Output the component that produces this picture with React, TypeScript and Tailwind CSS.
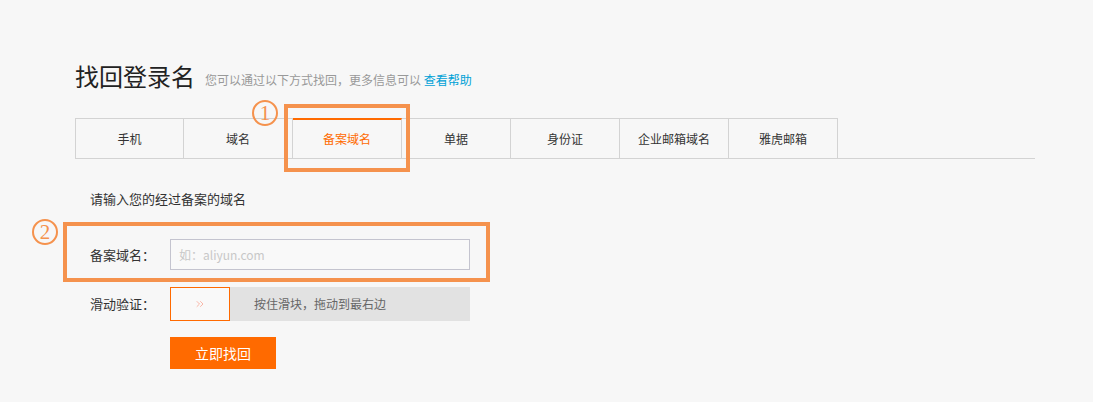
import { ChevronsRight } from "lucide-react";

const tabs = ["手机", "域名", "备案域名", "单据", "身份证", "企业邮箱域名", "雅虎邮箱"];

function Mark({ n, className }: { n: string; className: string }) {
  return (
    <div
      className={`absolute w-[26px] h-[26px] rounded-full border-2 border-[#f5924d] flex items-center justify-center text-[21px] leading-none text-[#f5924d] ${className}`}
      style={{ fontFamily: '"Liberation Serif", serif' }}
    >
      {n}
    </div>
  );
}

export default function App() {
  return (
    <div
      className="relative h-[402px] w-[1093px] overflow-hidden bg-[#f7f7f7] text-[#333]"
      style={{ fontFamily: '"Noto Sans CJK SC", "Noto Sans", sans-serif' }}
    >
      <div className="pl-[75px] pt-[58px]">
        <div className="flex items-end h-[36px]">
          <h1 className="text-[24px] leading-[36px] text-[#222] font-normal">找回登录名</h1>
          <p className="ml-[10px] mb-[5px] text-[12px] leading-[18px] text-[#999]">
            您可以通过以下方式找回，更多信息可以 <span className="text-[#00a1d6]">查看帮助</span>
          </p>
        </div>

        <div className="mt-[24px] flex w-[960px] border-b border-[#d3d3d3]">
          {tabs.map((t, i) => {
            const active = i === 2;
            return (
              <div
                key={t}
                className={
                  active
                    ? "w-[109px] h-[40px] -mb-px flex items-center justify-center border-t-2 border-t-[#ff6a00] border-r border-r-[#d3d3d3] bg-[#f7f7f7] text-[12px] text-[#ff6a00]"
                    : i === 0
                    ? "w-[109px] h-[40px] flex items-center justify-center border-t border-l border-r border-[#d3d3d3] text-[12px]"
                    : "w-[109px] h-[40px] flex items-center justify-center border-t border-r border-[#d3d3d3] text-[12px]"
                }
              >
                {t}
              </div>
            );
          })}
        </div>

        <div className="pl-[15px]">
          <p className="mt-[31px] text-[13px] leading-[18px]">请输入您的经过备案的域名</p>

          <div className="mt-[31px] flex items-center">
            <span className="w-[80px] text-[13px]">备案域名：</span>
            <div className="w-[300px] h-[31px] border border-[#c4c4cf] bg-[#f9f9f9] flex items-center px-[8px] text-[12px] text-[#c8c8c8]">
              如：aliyun.com
            </div>
          </div>

          <div className="mt-[17px] flex items-center">
            <span className="w-[80px] text-[13px]">滑动验证：</span>
            <div className="w-[300px] h-[34px] bg-[#e2e2e2] flex items-center">
              <div className="w-[60px] h-[34px] border border-[#ff6a00] bg-[#f9f9f9] flex items-center justify-center text-[#f8a08c]">
                <ChevronsRight size={12} strokeWidth={1.5} />
              </div>
              <span className="ml-[24px] text-[12px] text-[#666]">按住滑块，拖动到最右边</span>
            </div>
          </div>

          <button className="mt-[16px] ml-[80px] w-[106px] h-[32px] bg-[#ff6a00] text-white text-[14px]">
            立即找回
          </button>
        </div>
      </div>

      <div className="absolute left-[284px] top-[104px] w-[126px] h-[68px] border-4 border-[#f5924d]" />
      <Mark n="1" className="left-[252px] top-[100px]" />
      <div className="absolute left-[63px] top-[222px] w-[427px] h-[60px] border-4 border-[#f5924d]" />
      <Mark n="2" className="left-[32px] top-[219px]" />
    </div>
  );
}
